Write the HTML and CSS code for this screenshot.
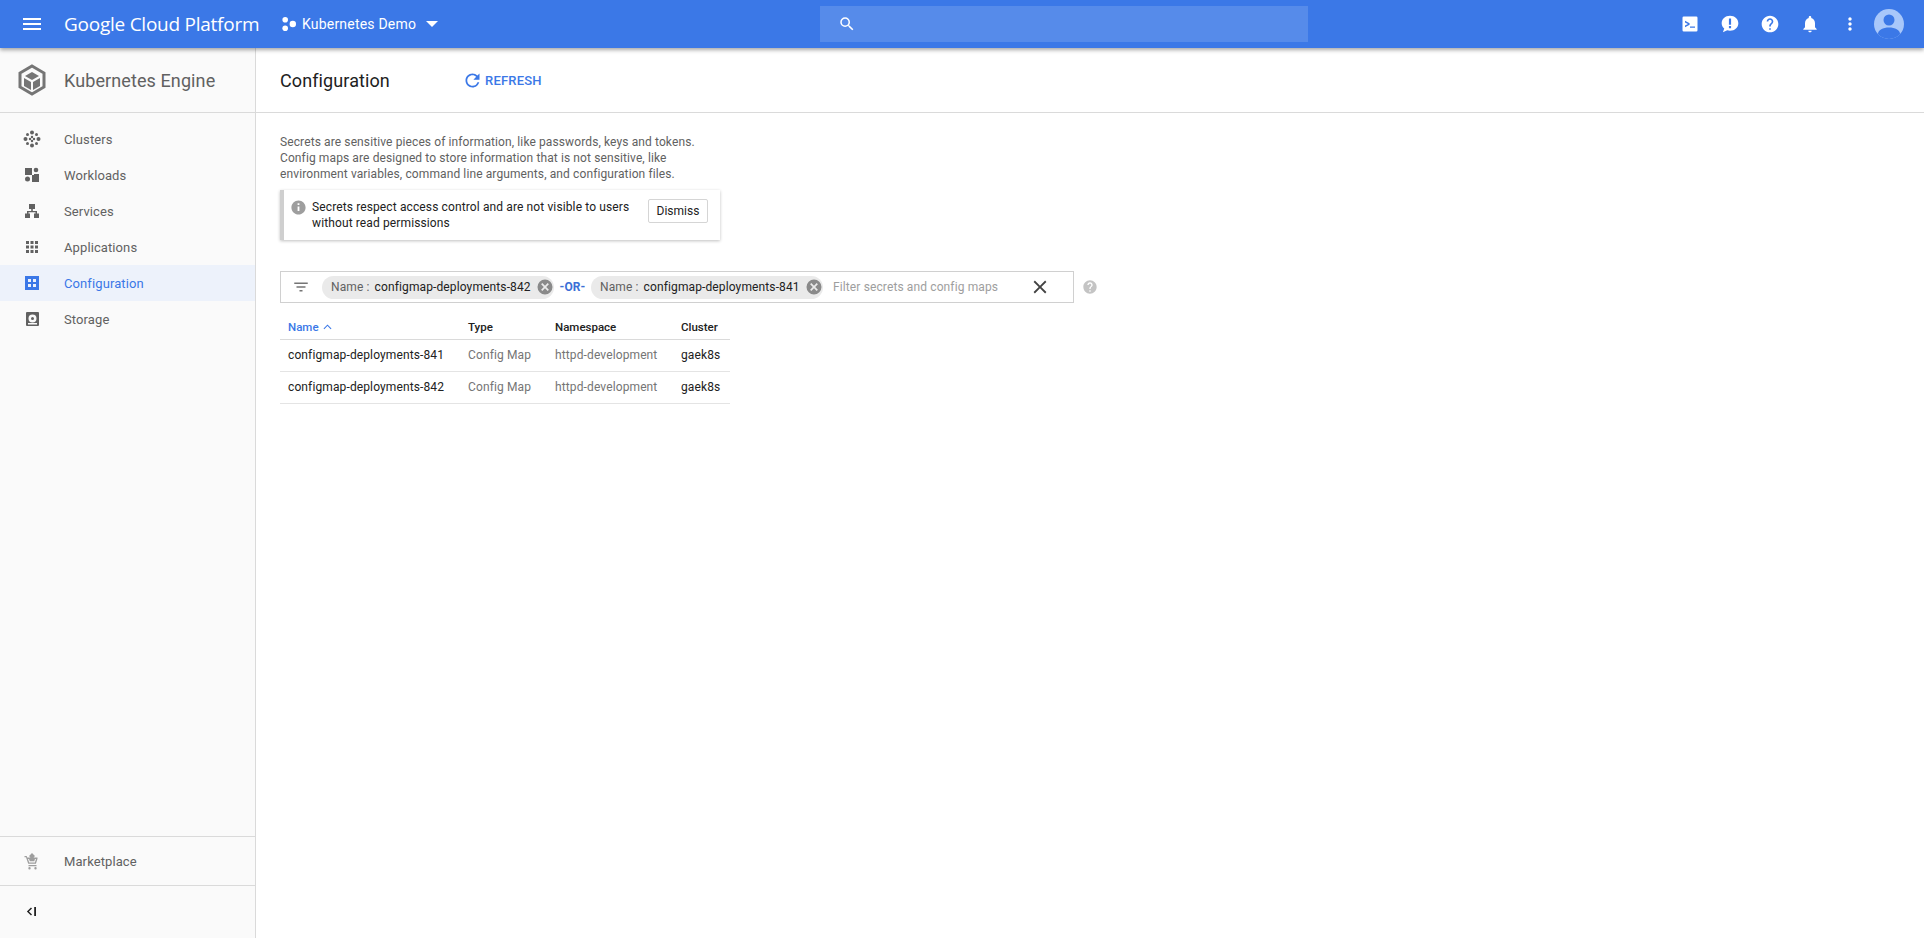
FILE: index.html
```html
<!DOCTYPE html>
<html lang="en">
<head>
    <meta charset="UTF-8">
    <meta name="viewport" content="width=device-width, initial-scale=1.0">
    <title>Configuration - Kubernetes Engine</title>
    <link rel="stylesheet" href="styles.css">
</head>
<body>
    <header class="topbar">
        <svg class="menu-icon" viewBox="0 0 24 24"><path d="M3 18h18v-2H3v2zm0-5h18v-2H3v2zm0-7v2h18V6H3z"/></svg>
        <div class="brand">Google Cloud Platform</div>
        <div class="project">
            <svg class="project-icon" viewBox="0 0 14 14"><circle cx="3.2" cy="2.8" r="2.8"/><circle cx="3.2" cy="11.2" r="2.8"/><circle cx="10.8" cy="7" r="3.2"/></svg>
            <span>Kubernetes Demo</span>
            <svg class="caret" viewBox="0 0 12 6"><path d="M0 0h12L6 6z"/></svg>
        </div>
        <div class="search">
            <svg class="search-icon" viewBox="0 0 24 24"><path d="M15.5 14h-.79l-.28-.27A6.47 6.47 0 0 0 16 9.5 6.5 6.5 0 1 0 9.5 16c1.61 0 3.09-.59 4.23-1.57l.27.28v.79l5 4.99L20.49 19l-4.99-5zm-6 0C7.01 14 5 11.99 5 9.5S7.01 5 9.5 5 14 7.01 14 9.5 11.99 14 9.5 14z"/></svg>
        </div>
        <div class="top-actions">
            <div class="top-btn"><svg viewBox="0 0 24 24"><path fill-rule="evenodd" d="M4.5 3h15A1.5 1.5 0 0 1 21 4.500v15a1.500 1.500 0 0 1-1.500 1.500h-15A1.500 1.500 0 0 1 3 19.500v-15A1.500 1.500 0 0 1 4.500 3zM6 8.200v1.900L9.600 12 6 13.900v1.900l5.500-3v-1.600zM12 15v1.600h6V15z"/></svg></div>
            <div class="top-btn"><svg viewBox="0 0 24 24"><path fill-rule="evenodd" d="M12 2c5.800 0 10 4 10 9s-4.200 9-10 9c-1.200 0-2.300-.2-3.300-.5L3.500 22l1.600-4.700C3.200 15.700 2 13.500 2 11c0-5 4.200-9 10-9zm-1.300 3.500v7.500h2.600V5.500zm0 9v2.600h2.600v-2.600z"/></svg></div>
            <div class="top-btn"><svg viewBox="0 0 24 24"><path d="M12 2C6.480 2 2 6.480 2 12s4.480 10 10 10 10-4.480 10-10S17.520 2 12 2zm1 17h-2v-2h2v2zm2.070-7.750l-.9.920C13.450 12.900 13 13.500 13 15h-2v-.5c0-1.100.45-2.100 1.170-2.830l1.240-1.260c.37-.36.590-.86.590-1.410 0-1.100-.9-2-2-2s-2 .9-2 2H8c0-2.210 1.790-4 4-4s4 1.790 4 4c0 .88-.36 1.680-.93 2.250z"/></svg></div>
            <div class="top-btn"><svg viewBox="0 0 24 24"><path d="M12 22c1.100 0 2-.9 2-2h-4c0 1.100.9 2 2 2zm6-6v-5c0-3.070-1.630-5.640-4.500-6.320V4c0-.83-.67-1.500-1.500-1.500s-1.500.67-1.500 1.500v.68C7.640 5.360 6 7.920 6 11v5l-2 2v1h16v-1l-2-2z"/></svg></div>
            <div class="top-btn"><svg viewBox="0 0 24 24"><path d="M12 8c1.100 0 2-.9 2-2s-.9-2-2-2-2 .9-2 2 .9 2 2 2zm0 2c-1.100 0-2 .9-2 2s.9 2 2 2 2-.9 2-2-.9-2-2-2zm0 6c-1.100 0-2 .9-2 2s.9 2 2 2 2-.9 2-2-.9-2-2-2z"/></svg></div>
            <svg class="avatar" viewBox="0 0 30 30">
                <defs><clipPath id="avatarClip"><circle cx="15" cy="15" r="15"/></clipPath></defs>
                <circle cx="15" cy="15" r="15" fill="#a8c7fa"/>
                <g clip-path="url(#avatarClip)" fill="#3b78e7"><circle cx="15" cy="11" r="5.500"/><path d="M4 30v-5c0-4 5-6.500 11-6.500s11 2.500 11 6.500v5z"/></g>
            </svg>
        </div>
    </header>

    <div class="app">
        <aside class="sidebar">
            <div class="product">
                <svg class="product-logo" viewBox="0 0 28 32">
                    <path d="M14 2l12 7v14l-12 7-12-7V9z" fill="none" stroke="#757575" stroke-width="3"/>
                    <path d="M14 8l7 4-7 4-7-4z" fill="#757575"/>
                    <path d="M6 14l7 4v8l-7-4zM22 14l-7 4v8l7-4z" fill="#757575"/>
                </svg>
                <span>Kubernetes Engine</span>
            </div>
            <nav class="nav">
                <a class="nav-item">
                    <svg viewBox="0 0 18 18"><g fill="#616161"><circle cx="9" cy="2.500" r="2"/><circle cx="9" cy="15.500" r="2"/><circle cx="2.500" cy="9" r="2"/><circle cx="15.500" cy="9" r="2"/><circle cx="4.500" cy="4.500" r="1.500"/><circle cx="13.500" cy="4.500" r="1.500"/><circle cx="4.500" cy="13.500" r="1.500"/><circle cx="13.500" cy="13.500" r="1.500"/><circle cx="9" cy="7" r="1.200"/><circle cx="9" cy="11" r="1.200"/><circle cx="7" cy="9" r="1.200"/><circle cx="11" cy="9" r="1.200"/></g></svg>
                    <span>Clusters</span>
                </a>
                <a class="nav-item">
                    <svg viewBox="0 0 18 18"><g fill="#616161"><rect x="2" y="2" width="7" height="7"/><circle cx="13" cy="4" r="2.300"/><circle cx="4.500" cy="13" r="2.500"/><rect x="9" y="9" width="7" height="7"/><rect x="11" y="8" width="5" height="2"/></g></svg>
                    <span>Workloads</span>
                </a>
                <a class="nav-item">
                    <svg viewBox="0 0 18 18"><path fill="#616161" d="M6 2h6v5H9.800v2H14v2.500h2V16h-5v-4.500h1.500V10.300h-7v1.200H7V16H2v-4.500h2V9h4.200V7H6z"/></svg>
                    <span>Services</span>
                </a>
                <a class="nav-item">
                    <svg viewBox="0 0 18 18"><path fill="#616161" d="M3 3h3v3H3zM7.500 3h3v3h-3zM12 3h3v3h-3zM3 7.500h3v3H3zM7.500 7.500h3v3h-3zM12 7.500h3v3h-3zM3 12h3v3H3zM7.500 12h3v3h-3zM12 12h3v3h-3z"/></svg>
                    <span>Applications</span>
                </a>
                <a class="nav-item active">
                    <svg viewBox="0 0 18 18"><path fill="#3b78e7" fill-rule="evenodd" d="M2 2h14v14H2zM5 5v3h3V5zM10 5v3h3V5zM5 10v3h3v-3zM10 10v3h3v-3z"/></svg>
                    <span>Configuration</span>
                </a>
                <a class="nav-item">
                    <svg viewBox="0 0 18 18"><path fill="#616161" fill-rule="evenodd" d="M4 2h11a1 1 0 0 1 1 1v12a1 1 0 0 1-1 1H4a1 1 0 0 1-1-1V3a1 1 0 0 1 1-1zm5.500 2.500a4 4 0 1 0 0 8 4 4 0 0 0 0-8zm0 2.500a1.500 1.500 0 1 1 0 3 1.500 1.500 0 0 1 0-3zM5 13v1.500h9V13z"/></svg>
                    <span>Storage</span>
                </a>
            </nav>
            <a class="nav-item market">
                <svg viewBox="0 0 18 18"><path fill="#9e9e9e" d="M9 1l3 3-3 3-3-3zM1.500 4h2.200l.5 1.500h10.300v1.300l-1.600 5H5.200L3 5.300H1.500zM5 7l1.200 3.500h5.700L13 7h-1l-.7 2.300H6.800L6 7zM5.500 13h8v1.200h-8zM6.500 15a1.200 1.200 0 1 1 0 2.400 1.200 1.200 0 0 1 0-2.400zM12.500 15a1.200 1.200 0 1 1 0 2.400 1.200 1.200 0 0 1 0-2.400z"/></svg>
                <span>Marketplace</span>
            </a>
            <div class="collapse">
                <svg viewBox="0 0 12 10"><path fill="none" stroke="#212121" stroke-width="1.600" d="M6 1L2 5l4 4"/><path fill="#212121" d="M9 0h2v10H9z"/></svg>
            </div>
        </aside>

        <main class="content">
            <div class="page-head">
                <h1>Configuration</h1>
                <a class="refresh">
                    <svg viewBox="0 0 24 24"><path d="M17.650 6.350A7.958 7.958 0 0 0 12 4c-4.420 0-7.990 3.580-7.990 8s3.570 8 7.990 8c3.730 0 6.840-2.550 7.730-6h-2.080A5.990 5.990 0 0 1 12 18c-3.310 0-6-2.690-6-6s2.690-6 6-6c1.660 0 3.140.69 4.220 1.780L13 11h7V4l-2.350 2.350z"/></svg>
                    <span>REFRESH</span>
                </a>
            </div>
            <div class="page-body">
                <p class="intro">Secrets are sensitive pieces of information, like passwords, keys and tokens.<br>Config maps are designed to store information that is not sensitive, like<br>environment variables, command line arguments, and configuration files.</p>
                <div class="notice">
                    <svg class="notice-icon" viewBox="0 0 24 24"><path fill="#9e9e9e" d="M12 2C6.480 2 2 6.480 2 12s4.480 10 10 10 10-4.480 10-10S17.520 2 12 2zm1.300 15h-2.600v-6.500h2.600V17zm0-8.400h-2.600V6h2.600v2.600z"/></svg>
                    <p>Secrets respect access control and are not visible to users without read permissions</p>
                    <button class="dismiss">Dismiss</button>
                </div>

                <div class="filter-row">
                    <div class="filter">
                        <svg class="filter-icon" viewBox="0 0 24 24"><path d="M10 18h4v-2h-4v2zM3 6v2h18V6H3zm3 7h12v-2H6v2z"/></svg>
                        <span class="chip">
                            <span class="chip-key">Name :</span>
                            <span>configmap-deployments-842</span>
                            <svg class="chip-x" viewBox="0 0 24 24"><path fill-rule="evenodd" d="M12 2a10 10 0 1 1 0 20 10 10 0 0 1 0-20zM8.400 6.800L6.800 8.400 10.400 12l-3.600 3.600 1.600 1.600 3.600-3.600 3.600 3.600 1.600-1.600-3.600-3.600 3.600-3.600-1.600-1.600-3.600 3.600z"/></svg>
                        </span>
                        <span class="or">-OR-</span>
                        <span class="chip">
                            <span class="chip-key">Name :</span>
                            <span>configmap-deployments-841</span>
                            <svg class="chip-x" viewBox="0 0 24 24"><path fill-rule="evenodd" d="M12 2a10 10 0 1 1 0 20 10 10 0 0 1 0-20zM8.400 6.800L6.800 8.400 10.400 12l-3.600 3.600 1.600 1.600 3.600-3.600 3.600 3.600 1.600-1.600-3.600-3.600 3.600-3.600-1.600-1.600-3.600 3.600z"/></svg>
                        </span>
                        <span class="placeholder">Filter secrets and config maps</span>
                        <svg class="clear-icon" viewBox="0 0 24 24"><path d="M19 6.410L17.590 5 12 10.590 6.410 5 5 6.410 10.590 12 5 17.590 6.410 19 12 13.410 17.590 19 19 17.590 13.410 12z"/></svg>
                    </div>
                    <svg class="filter-help" viewBox="0 0 24 24"><path d="M12 2C6.480 2 2 6.480 2 12s4.480 10 10 10 10-4.480 10-10S17.520 2 12 2zm1 17h-2v-2h2v2zm2.070-7.750l-.9.920C13.450 12.900 13 13.500 13 15h-2v-.5c0-1.100.45-2.100 1.170-2.830l1.240-1.260c.37-.36.590-.86.590-1.410 0-1.100-.9-2-2-2s-2 .9-2 2H8c0-2.210 1.790-4 4-4s4 1.790 4 4c0 .88-.36 1.680-.93 2.250z"/></svg>
                </div>

                <table class="data">
                    <thead>
                        <tr>
                            <th class="sorted">Name <svg class="sort-icon" viewBox="0 0 10 6"><path fill="none" stroke="#3b78e7" stroke-width="1.200" d="M1 5l4-4 4 4"/></svg></th>
                            <th>Type</th>
                            <th>Namespace</th>
                            <th>Cluster</th>
                        </tr>
                    </thead>
                    <tbody>
                        <tr>
                            <td>configmap-deployments-841</td>
                            <td class="muted">Config Map</td>
                            <td class="muted">httpd-development</td>
                            <td>gaek8s</td>
                        </tr>
                        <tr>
                            <td>configmap-deployments-842</td>
                            <td class="muted">Config Map</td>
                            <td class="muted">httpd-development</td>
                            <td>gaek8s</td>
                        </tr>
                    </tbody>
                </table>
            </div>
        </main>
    </div>
</body>
</html>
```

FILE: styles.css
```css
* {
    box-sizing: border-box;
}
html, body {
    height: 100%;
}
body {
    margin: 0;
    font-family: Roboto, Arial, sans-serif;
    font-size: 13px;
    color: #212121;
    background-color: white;
    overflow: hidden;
}
svg {
    display: block;
    flex: none;
}

/* top bar */
.topbar {
    position: relative;
    z-index: 2;
    display: flex;
    align-items: center;
    height: 48px;
    background-color: #3b78e7;
    box-shadow: 0 2px 4px rgba(0, 0, 0, 0.35);
    color: white;
    fill: white;
}
.menu-icon {
    width: 24px;
    height: 24px;
    margin-left: 20px;
}
.brand {
    margin-left: 20px;
    width: 216px;
    font-family: "Open Sans", Roboto, sans-serif;
    font-size: 19px;
    letter-spacing: -0.25px;
}
.project {
    display: flex;
    align-items: center;
    width: 256px;
    font-size: 14px;
    letter-spacing: 0.2px;
}
.project-icon {
    width: 14px;
    height: 14px;
    margin-left: 2px;
    margin-right: 6px;
}
.caret {
    width: 12px;
    height: 6px;
    margin-left: 10px;
}
.search {
    display: flex;
    align-items: center;
    width: 488px;
    height: 36px;
    margin-left: 284px;
    padding-left: 18px;
    background-color: rgba(255, 255, 255, 0.14);
}
.search-icon {
    width: 18px;
    height: 18px;
}
.top-actions {
    display: flex;
    align-items: center;
    margin-left: auto;
    padding-right: 20px;
}
.top-btn {
    display: flex;
    justify-content: center;
    width: 40px;
}
.top-btn svg {
    width: 20px;
    height: 20px;
}
.avatar {
    width: 30px;
    height: 30px;
    margin-left: 4px;
}

/* layout */
.app {
    display: flex;
    height: calc(100% - 48px);
}
.sidebar {
    display: flex;
    flex-direction: column;
    width: 256px;
    flex: none;
    background-color: #fafafa;
    border-right: 1px solid #dadada;
}
.product {
    display: flex;
    align-items: center;
    height: 65px;
    padding-left: 18px;
    border-bottom: 1px solid #dadada;
    font-size: 18px;
    letter-spacing: 0.1px;
    color: #616161;
}
.product-logo {
    width: 28px;
    height: 32px;
    margin-right: 18px;
}
.nav {
    flex: 1;
    padding-top: 8px;
}
.nav-item {
    display: flex;
    align-items: center;
    height: 36px;
    padding-left: 23px;
    color: #616161;
    letter-spacing: 0.1px;
}
.nav-item svg {
    width: 18px;
    height: 18px;
    margin-right: 23px;
}
.nav-item.active {
    background-color: #edf2fb;
    color: #3b78e7;
}
.market {
    height: 50px;
    border-top: 1px solid #dadada;
    border-bottom: 1px solid #dadada;
}
.collapse {
    height: 52px;
    padding: 21px 0 0 26px;
}
.collapse svg {
    width: 11px;
    height: 9px;
}

/* content */
.content {
    flex: 1;
}
.page-head {
    display: flex;
    align-items: center;
    height: 65px;
    padding-left: 24px;
    border-bottom: 1px solid #dadada;
}
.page-head h1 {
    width: 182px;
    margin: 0;
    font-size: 18px;
    font-weight: 400;
    letter-spacing: 0.1px;
    color: #212121;
}
.refresh {
    display: flex;
    align-items: center;
    font-size: 13px;
    font-weight: 500;
    letter-spacing: 0.2px;
    color: #3b78e7;
    fill: #3b78e7;
}
.refresh svg {
    width: 21px;
    height: 21px;
    margin-right: 2px;
}
.page-body {
    padding: 21px 24px;
}
.intro {
    margin: 0;
    font-size: 12px;
    line-height: 16px;
    letter-spacing: 0.11px;
    color: #616161;
}
.notice {
    display: flex;
    align-items: flex-start;
    width: 440px;
    height: 50px;
    margin-top: 8px;
    padding: 9px 12px 0 6px;
    border-left: 4px solid #cfcfcf;
    box-shadow: 0 1px 3px rgba(0, 0, 0, 0.25);
    background-color: white;
}
.notice-icon {
    width: 17px;
    height: 17px;
    margin-right: 5px;
}
.notice p {
    flex: 1;
    margin: 0;
    font-size: 12px;
    line-height: 16px;
    letter-spacing: 0.12px;
    color: #212121;
}
.dismiss {
    width: 60px;
    height: 24px;
    padding: 0;
    font-family: inherit;
    font-size: 12px;
    color: #212121;
    background-color: white;
    border: 1px solid #d5d5d5;
    border-radius: 2px;
}

/* filter */
.filter-row {
    display: flex;
    align-items: center;
    margin-top: 31px;
}
.filter {
    display: flex;
    align-items: center;
    width: 794px;
    height: 32px;
    padding-left: 11px;
    border: 1px solid #d0d0d0;
    font-size: 12px;
    letter-spacing: 0.12px;
}
.filter-icon {
    width: 18px;
    height: 18px;
    margin-right: 12px;
    fill: #757575;
}
.chip {
    display: flex;
    align-items: center;
    gap: 5px;
    width: 232px;
    height: 23px;
    padding: 0 2px 0 9px;
    border-radius: 12px;
    background-color: #eaeaea;
    color: #212121;
    white-space: nowrap;
}
.chip-key {
    color: #616161;
}
.chip-x {
    width: 18px;
    height: 18px;
    margin-left: auto;
    fill: #8a8a8a;
}
.or {
    width: 37px;
    text-align: center;
    font-weight: 700;
    color: #3b6fd6;
    letter-spacing: 0.1px;
}
.placeholder {
    width: 196px;
    margin-left: 10px;
    color: #9e9e9e;
}
.clear-icon {
    width: 22px;
    height: 22px;
    fill: #424242;
}
.filter-help {
    width: 16px;
    height: 16px;
    margin-left: 8px;
    fill: #c4c4c4;
}

/* table */
.data {
    width: 450px;
    margin-top: 12px;
    border-collapse: collapse;
    table-layout: fixed;
    font-size: 12px;
    letter-spacing: 0.12px;
}
.data th {
    height: 24px;
    padding: 0 0 0 8px;
    text-align: left;
    font-size: 11.5px;
    font-weight: 500;
    letter-spacing: 0;
    color: #212121;
    border-bottom: 1px solid #dadada;
}
.data th:nth-child(1) { width: 180px; }
.data th:nth-child(2) { width: 87px; }
.data th:nth-child(3) { width: 126px; }
.data th:nth-child(4) { width: 57px; }
.data th.sorted {
    color: #3b78e7;
}
.sort-icon {
    display: inline-block;
    width: 9px;
    height: 6px;
    margin-left: 2px;
    vertical-align: 1px;
}
.data td {
    height: 32px;
    padding: 0 0 0 8px;
    white-space: nowrap;
    border-bottom: 1px solid #e4e4e4;
}
.data td.muted {
    color: #757575;
}
```
